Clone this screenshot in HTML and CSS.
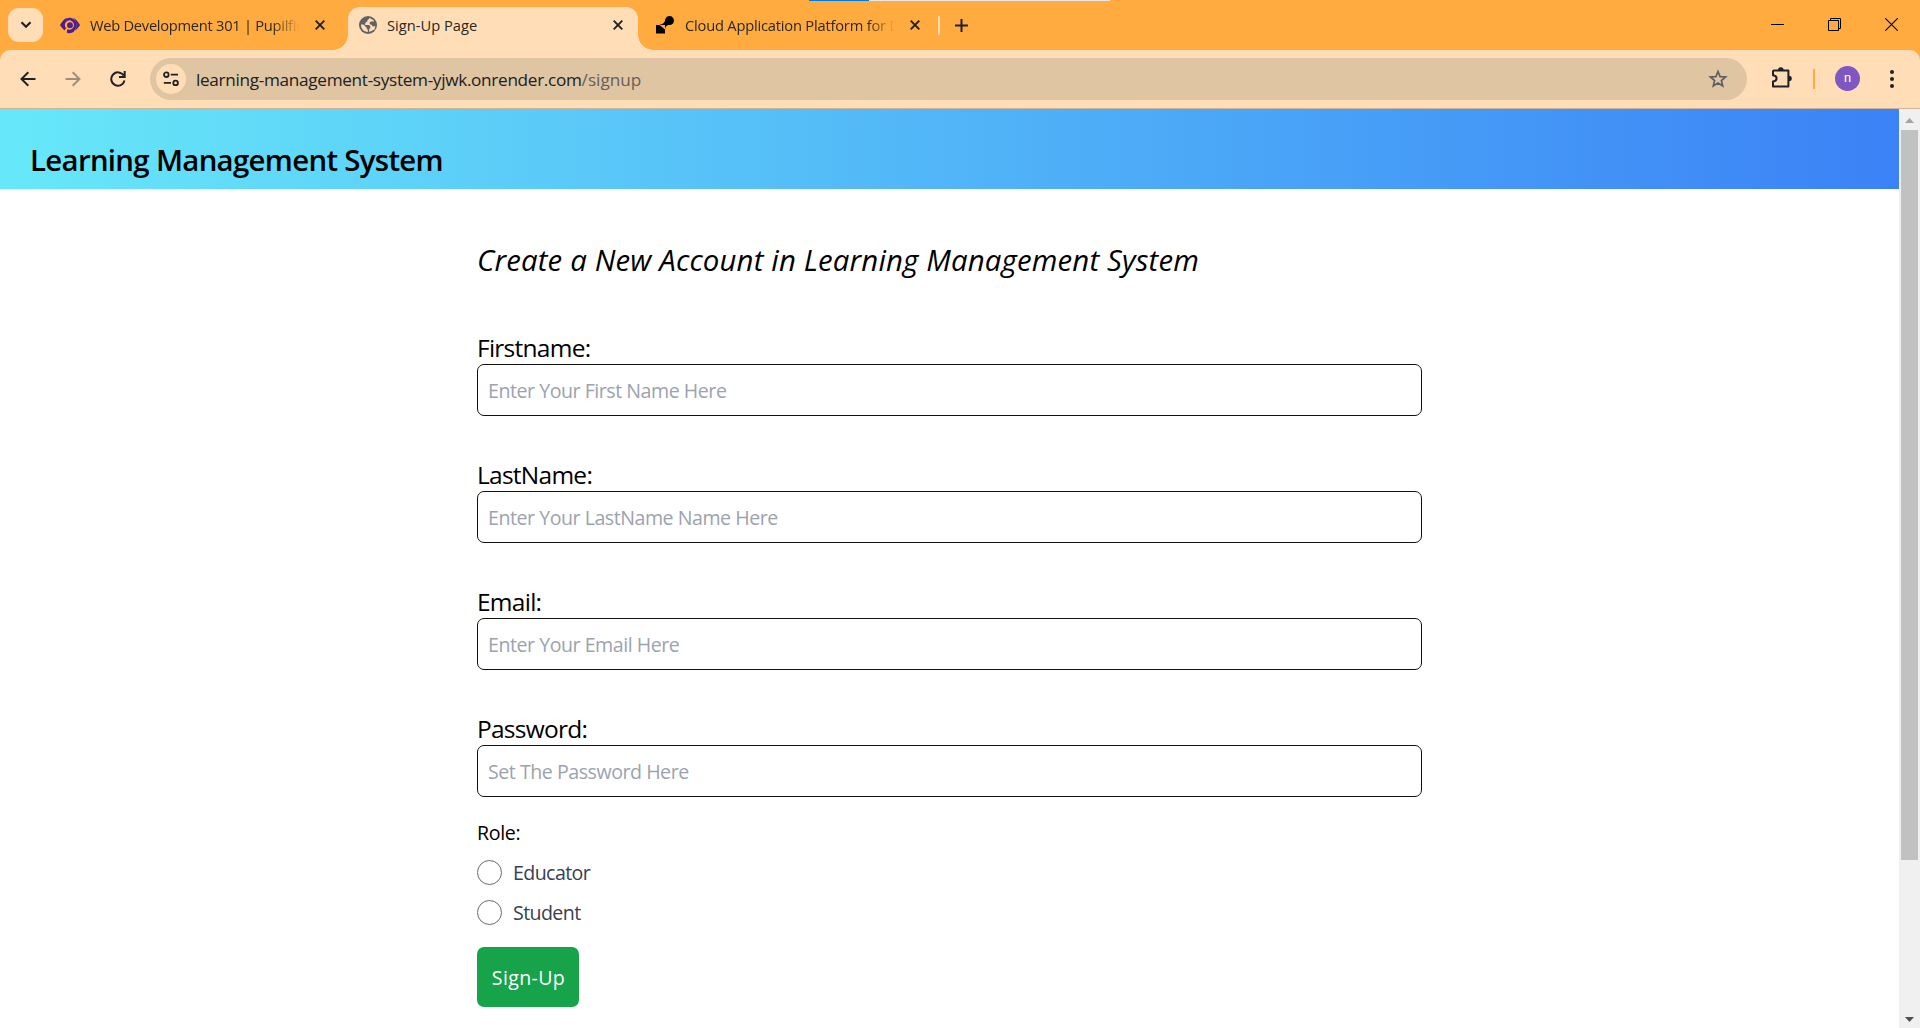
FILE: index.html
```
<!DOCTYPE html>
<html lang="en">
<head>
<meta charset="utf-8">
<title>Sign-Up Page</title>
<link rel="stylesheet" href="styles.css">
</head>
<body>
<div class="window">
  <div class="loading-line"><i class="loading-done"></i></div>
  <div class="tab-strip">
    <button class="tab-search" aria-label="Search tabs"><svg width="12" height="8" viewBox="0 0 12 8"><path d="M1.500 1.300 6 5.800l4.500-4.500" fill="none" stroke="#202124" stroke-width="2.200"/></svg></button>
    <div class="tab tab-first">
      <svg class="favicon eye" width="20" height="17" viewBox="0 0 20 17"><path fill="none" stroke="#4c1d95" stroke-width="2.600" d="M5.300 12.200A5.900 5.900 0 1 1 7.300 13.500"/><path fill="#4c1d95" d="M0 8C2.200 4.300 4.300 2 7 .8 4.300 3.500 3.300 6 3.500 8.500c.1 1.900.8 3.700 2 5.200C3.200 12.500 1.400 10.600 0 8ZM20 8c-2.200-3.700-4.300-6-7-7.200 2.700 2.700 3.700 5.200 3.500 7.700-.1 1.900-.8 3.700-2 5.200C16.800 12.500 18.600 10.600 20 8ZM7.200 12.700c2.600 1.200 5 .6 7-1v2.600c-2.300 1.900-4.600 2.300-7 1.700Z"/><circle cx="10" cy="8.200" r="2.900" fill="#4c1d95"/></svg>
      <span class="tab-title faded title-web">Web Development 301 | Pupilfirst</span>
      <svg class="tab-close" width="10" height="10" viewBox="0 0 10 10"><path d="M.7.7l8.600 8.600M9.300.7.7 9.300"/></svg>
    </div>
    <div class="tab active">
      <svg class="favicon" width="18" height="18" viewBox="0 0 18 18"><circle cx="9" cy="9" r="9" fill="#5f6368"/><path fill="#ffdeb7" d="M10.800 2.100 8.500 4.300c-.4.400.2.900-.3 1.300L6.700 6.400c-.5.300-.1 1-.6 1.300-.5.400-.2 1.200.5 1.200h3c1 0 1.700.8 1.700 1.700v1.500c0 .5-.5.900-1.100.9v2.900l5.300-2.500c.6-1.200.8-2.300.7-3.600-.7 1-2 .8-2.700.1-.6-.6-.9-1.500-1.900-1.500-.8 0-1-.9-.9-1.500.1-.8.8-1.400 1.600-1.400h1.600c.9 0 1.200-.4 1-1Z"/><path fill="#ffdeb7" d="M2 8.600h2.500l3 2.800c.4.400.1 1.100.7 1.500l.6 1.100v2C4.800 16 1.900 12.700 2 8.600Z"/></svg>
      <span class="tab-title title-sign">Sign-Up Page</span>
      <svg class="tab-close" width="10" height="10" viewBox="0 0 10 10"><path d="M.7.7l8.600 8.600M9.300.7.7 9.300"/></svg>
    </div>
    <div class="tab tab-last">
      <svg class="favicon" width="18" height="18" viewBox="0 0 18 18"><circle cx="13.500" cy="4.600" r="4.500"/><path d="M0 9h9v8.500H0ZM9.100 3.600C9 7 6.500 8.300 3.500 9L9 13.500c.2-3 2-4.600 5-5Z"/></svg>
      <span class="tab-title faded title-cloud">Cloud Application Platform for Developers</span>
      <svg class="tab-close" width="10" height="10" viewBox="0 0 10 10"><path d="M.7.7l8.600 8.600M9.300.7.7 9.300"/></svg>
    </div>
    <i class="tab-divider"></i>
    <svg class="new-tab" width="13" height="13" viewBox="0 0 13 13"><path d="M6.500 0v13M0 6.500h13" stroke="#202124" stroke-width="2"/></svg>
    <div class="window-buttons">
      <svg width="13" height="13" viewBox="0 0 13 13"><path d="M0 6.500h13" stroke="#000"/></svg>
      <svg width="13" height="13" viewBox="0 0 13 13"><path d="M.5 2.500h10v10H.5ZM2.500 2.500v-2h10v10h-2" fill="none" stroke="#000"/></svg>
      <svg width="13" height="13" viewBox="0 0 13 13"><path d="m.3.300 12.400 12.400M12.700.3.300 12.700" stroke="#000" stroke-width="1.100"/></svg>
    </div>
  </div>

  <div class="toolbar-back">
    <div class="toolbar">
      <svg class="nav-back" width="16" height="16" viewBox="0 0 16 16"><path d="M15.500 8H2M8.300 1.200 1.500 8l6.800 6.800" fill="none" stroke="#202124" stroke-width="2"/></svg>
      <svg class="nav-forward" width="16" height="16" viewBox="0 0 16 16"><path d="M.5 8H14M7.700 1.200 14.500 8l-6.800 6.800" fill="none" stroke="#a08d78" stroke-width="2"/></svg>
      <svg class="nav-reload" width="16" height="16" viewBox="0 0 16 16"><path d="M13.700 4.600A6.700 6.700 0 1 0 14.500 9.500M14.700 0v5.900H9" fill="none" stroke="#202124" stroke-width="2"/></svg>
      <div class="omnibox">
        <span class="site-info"><svg width="16" height="16" viewBox="0 0 16 16" fill="none" stroke="#202124" stroke-width="1.800"><circle cx="3.300" cy="3.700" r="2.300"/><path d="M7.800 3.700H15M.8 11.900H8"/><circle cx="12.600" cy="11.900" r="2.300"/></svg></span>
        <span class="url"><span class="host">learning-management-system-yjwk.onrender.com</span><span class="path">/signup</span></span>
        <svg class="star" width="20" height="20" viewBox="0 0 20 20"><path d="m10 2.500 2.100 5.100 5.500.4-4.200 3.500 1.300 5.400-4.700-2.900-4.700 2.900 1.300-5.400L2.400 8l5.500-.4Z" fill="none" stroke="#5f5f60" stroke-width="1.700"/></svg>
      </div>
      <svg class="extension" width="22" height="21" viewBox="0 0 22 21"><path d="M3 3.500h14.400v16H2v-5.100c2.700-.2 3.600-1.700 3.600-3.100S4.500 8.400 2 8.200V4.500q0-1 1-1Z" fill="none" stroke="#202124" stroke-width="2" stroke-linejoin="round"/><path d="M7 3a2.800 2.800 0 0 1 5.600 0ZM18 8.700a2.800 2.800 0 0 1 0 5.600Z" fill="#202124"/></svg>
      <i class="toolbar-divider"></i>
      <span class="avatar">n</span>
      <svg class="menu" width="4" height="18" viewBox="0 0 4 18" fill="#202124"><circle cx="2" cy="2" r="2"/><circle cx="2" cy="9" r="2"/><circle cx="2" cy="16" r="2"/></svg>
    </div>
  </div>

  <div class="viewport">
    <main class="page">
      <header class="site-header"><h1 class="brand">Learning Management System</h1></header>
      <form class="signup">
        <h2 class="heading">Create a New Account in Learning Management System</h2>
        <div class="field"><label class="label" for="first">Firstname:</label><input class="input" id="first" type="text" placeholder="Enter Your First Name Here"></div>
        <div class="field"><label class="label" for="last">LastName:</label><input class="input" id="last" type="text" placeholder="Enter Your LastName Name Here"></div>
        <div class="field"><label class="label" for="email">Email:</label><input class="input" id="email" type="email" placeholder="Enter Your Email Here"></div>
        <div class="field"><label class="label" for="password">Password:</label><input class="input" id="password" type="password" placeholder="Set The Password Here"></div>
        <p class="role">Role:</p>
        <label class="option"><input class="radio" type="radio" name="role"><span>Educator</span></label>
        <label class="option"><input class="radio" type="radio" name="role"><span>Student</span></label>
        <button class="submit" type="button">Sign-Up</button>
      </form>
    </main>
    <div class="scrollbar">
      <svg class="arrow-up" width="9" height="5" viewBox="0 0 9 5"><path d="M0 5 4.500 0 9 5Z" fill="#a3a3a3"/></svg>
      <i class="thumb"></i>
      <svg class="arrow-down" width="9" height="5" viewBox="0 0 9 5"><path d="M0 0h9L4.500 5Z" fill="#505050"/></svg>
    </div>
  </div>
</div>
</body>
</html>
```
FILE: styles.css
```
* { box-sizing: border-box; }
body { margin: 0; background: #fff; font-family: "Open Sans", "Noto Sans", sans-serif; color: #000; overflow: hidden; }
svg { display: block; flex: none; }
button { border: 0; padding: 0; font: inherit; }
.window { position: relative; display: flex; flex-direction: column; width: 1920px; height: 1028px; }

.loading-line { position: absolute; top: 0; left: 809px; width: 301px; height: 1px; background: #e6e6e6; }
.loading-done { display: block; width: 60px; height: 1px; background: #0078d7; }

/* Tabs */
.tab-strip { display: flex; height: 50px; background: #ffab40; padding-left: 8px; }
.tab-search { display: grid; place-items: center; width: 35px; height: 34px; margin-top: 8px; border-radius: 11px; background: #ffdeb7; }
.tab { display: flex; align-items: center; height: 43px; margin-top: 7px; padding-bottom: 7px; }
.tab-first { width: 305px; padding-left: 17px; }
.active { position: relative; width: 290px; padding-left: 11px; border-radius: 12px 12px 0 0; background: #ffdeb7; }
.active::before, .active::after { content: ""; position: absolute; bottom: 0; width: 15px; height: 15px; }
.active::before { left: -15px; background: radial-gradient(circle at 0 0, transparent 14.500px, #ffdeb7 15px); }
.active::after { right: -15px; background: radial-gradient(circle at 100% 0, transparent 14.500px, #ffdeb7 15px); }
.tab-last { width: 300px; padding-left: 18px; }
.tab-title { overflow: hidden; margin-left: 10px; width: 210px; font-size: 14.700px; line-height: 24px; white-space: nowrap; color: #2b2722; }
.title-web { letter-spacing: -0.280px; }
.title-sign { width: 220px; }
.title-cloud { letter-spacing: -0.206px; }
.tab-last .title-cloud { margin-left: 11px; }
.faded { -webkit-mask-image: linear-gradient(90deg, #000 182px, transparent 210px); mask-image: linear-gradient(90deg, #000 182px, transparent 210px); }
.tab-close { margin-left: 15px; fill: none; stroke: #202124; stroke-width: 1.900; }
.active .tab-close { margin-left: 5px; }
.active .tab-title { margin-left: 10px; }
.active .tab-close { margin-left: 6px; }
.tab-divider { width: 2px; height: 19px; margin-top: 16px; border-radius: 1px; background: #ffdeb7; }
.new-tab { margin: 19px 0 0 15px; }
.window-buttons { display: flex; gap: 44px; margin: 18px 22px 0 auto; }

/* Toolbar */
.toolbar-back { background: #ffab40; }
.toolbar { display: flex; align-items: center; height: 59px; padding-left: 20px; background: #ffdeb7; border-bottom: 1px solid #cfb394; border-radius: 10px 10px 0 0; }
.nav-forward { margin-left: 29px; }
.nav-reload { margin-left: 29px; }
.omnibox { display: flex; align-items: center; width: 1597px; height: 42px; margin-left: 24px; padding: 0 19px 0 6px; border-radius: 21px; background: #dfc5a2; }
.site-info { display: grid; place-items: center; width: 30px; height: 30px; border-radius: 50%; background: #ffdeb7; }
.url { margin-left: 10px; font-size: 17.200px; line-height: 24px; padding-top: 1px; white-space: nowrap; color: #202124; }
.host { letter-spacing: -0.315px; }
.path { letter-spacing: 0; color: #66605a; }
.star { margin-left: auto; }
.extension { margin: 0 0 3px 24px; }
.toolbar-divider { width: 2px; height: 20px; margin-left: 20px; background: #ffab40; }
.avatar { width: 25px; height: 25px; margin: 0 0 1px 20px; border-radius: 50%; background: #7e57c2; color: #fff; font: 13px/23px Roboto, sans-serif; text-align: center; }
.menu { margin-left: 30px; }

/* Page */
.viewport { display: flex; flex: 1; min-height: 0; }
.page { width: 1899px; }
.site-header { height: 80px; padding: 31px 0 0 30px; background: linear-gradient(90deg, #67e8f9, #3b82f6); }
.brand { margin: 0; font-size: 29.400px; line-height: 40px; font-weight: 600; letter-spacing: -0.690px; }
.signup { display: flex; flex-direction: column; width: 945px; margin: 0 auto; padding-top: 51px; }
.heading { margin: 0 0 51px; font-size: 29.400px; line-height: 40px; font-weight: 400; font-style: italic; letter-spacing: 0.150px; white-space: nowrap; }
.field { display: flex; flex-direction: column; margin-bottom: 42px; }
.label { font-size: 24.500px; line-height: 33px; letter-spacing: -0.740px; }
.input { height: 52px; margin: 0; padding: 0 10px; border: 1px solid #111; border-radius: 7px; background: #fff; font: 19.600px "Open Sans", "Noto Sans", sans-serif; letter-spacing: -0.470px; }
.input::placeholder { color: #9ca3af; opacity: 1; }
.role { margin: -21px 0 9px; font-size: 19.600px; line-height: 30px; letter-spacing: -0.330px; }
.option { display: flex; align-items: center; height: 30px; margin-bottom: 10px; font-size: 19.600px; letter-spacing: -0.600px; color: #374151; }
.radio { appearance: none; width: 25px; height: 25px; margin: 0 11px 0 0; border: 1px solid #6b6b6b; border-radius: 50%; background: #fff; }
.submit { align-self: flex-start; width: 102px; height: 60px; margin-top: 10px; padding-left: 1px; border-radius: 7px; background: #16a34a; color: #fff; font-size: 19.600px; letter-spacing: 0.350px; }

/* Scrollbar */
.scrollbar { display: flex; flex-direction: column; width: 21px; padding: 9px 0 6px 2px; background: #f0f0f0; }
.arrow-up { margin-left: 4px; }
.thumb { width: 17px; height: 730px; margin-top: 7px; background: #c1c1c1; }
.arrow-down { margin: auto 0 0 4px; }
```
